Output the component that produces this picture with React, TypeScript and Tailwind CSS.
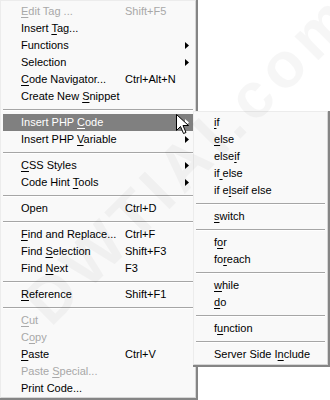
import type { ReactNode } from 'react';

type Item =
  | { sep: true }
  | { label: string; key?: string; sub?: boolean; disabled?: boolean; active?: boolean };

const mainItems: Item[] = [
  { label: '&Edit Tag ...', key: 'Shift+F5', disabled: true },
  { label: 'Insert &Tag...' },
  { label: 'Functions', sub: true },
  { label: 'Selection', sub: true },
  { label: '&Code Navigator...', key: 'Ctrl+Alt+N' },
  { label: 'Create New &Snippet' },
  { sep: true },
  { label: 'Insert PHP &Code', sub: true, active: true },
  { label: 'Insert PHP &Variable', sub: true },
  { sep: true },
  { label: '&CSS Styles', sub: true },
  { label: 'Code Hint &Tools', sub: true },
  { sep: true },
  { label: 'Open', key: 'Ctrl+D' },
  { sep: true },
  { label: '&Find and Replace...', key: 'Ctrl+F' },
  { label: 'Find &Selection', key: 'Shift+F3' },
  { label: 'Find &Next', key: 'F3' },
  { sep: true },
  { label: '&Reference', key: 'Shift+F1' },
  { sep: true },
  { label: '&Cut', disabled: true },
  { label: 'C&opy', disabled: true },
  { label: '&Paste', key: 'Ctrl+V' },
  { label: 'Paste &Special...', disabled: true },
  { label: 'Print Code...' },
];

const phpItems: Item[] = [
  { label: '&if' },
  { label: '&else' },
  { label: 'else&if' },
  { label: 'if& else' },
  { label: 'if e&lseif else' },
  { sep: true },
  { label: '&switch' },
  { sep: true },
  { label: 'f&or' },
  { label: 'fo&reach' },
  { sep: true },
  { label: '&while' },
  { label: '&do' },
  { sep: true },
  { label: 'f&unction' },
  { sep: true },
  { label: 'Server Side I&nclude' },
];

function Mnemonic({ text }: { text: string }) {
  const i = text.indexOf('&');
  if (i < 0) return <>{text}</>;
  const ch = text[i + 1];
  return (
    <>
      {text.slice(0, i)}
      <span className="underline underline-offset-[2px] whitespace-pre">{ch}</span>
      {text.slice(i + 2)}
    </>
  );
}

function Arrow({ white }: { white?: boolean }) {
  return (
    <svg width="4" height="7" viewBox="0 0 4 7" className="block">
      <path d="M0 0 L4 3.5 L0 7 Z" fill={white ? '#ffffff' : '#000000'} />
    </svg>
  );
}

function Separator() {
  return (
    <div className="h-[9px] flex items-center px-[2px]">
      <div className="w-full h-[2px] border-t border-[#a6a6a6] border-b border-b-white" />
    </div>
  );
}

function Row({ item, keyCol }: { item: Exclude<Item, { sep: true }>; keyCol?: boolean }) {
  return (
    <div
      className={
        'h-[17px] mx-[2px] flex items-center whitespace-nowrap ' +
        (item.active ? 'bg-[#808080] text-white ' : '') +
        (item.disabled ? 'text-[#a8a8a8]' : item.active ? '' : 'text-black')
      }
    >
      <span className={keyCol ? 'pl-[18px] w-[122px]' : 'pl-[18px]'}>
        <Mnemonic text={item.label} />
      </span>
      {keyCol && <span className="w-[62px]">{item.key ?? ''}</span>}
      {item.sub && (
        <span className="ml-auto mr-[4px]">
          <Arrow white={item.active} />
        </span>
      )}
    </div>
  );
}

function Menu({ items, keyCol, className }: { items: Item[]; keyCol?: boolean; className?: string }) {
  return (
    <div className={'border-r-2 border-b-2 border-[#858585] ' + (className ?? '')}>
      <div className="h-full border-t border-l border-[#ececec] border-r border-b border-r-[#d6d6d6] border-b-[#d6d6d6] bg-[#f9f9f9] py-[2px]">
        {items.map((it, i): ReactNode =>
          'sep' in it ? <Separator key={i} /> : <Row key={i} item={it} keyCol={keyCol} />
        )}
      </div>
    </div>
  );
}

function Cursor() {
  return (
    <svg width="13" height="21" viewBox="0 0 13 21" className="absolute left-[176px] top-[114px]">
      <path
        d="M0.5 0.5 L0.5 16.5 L4.5 12.5 L7.5 19.5 L10 18.5 L7 11.5 L12.5 11.5 Z"
        fill="#ffffff"
        stroke="#000000"
        strokeWidth="1"
        strokeLinejoin="miter"
      />
    </svg>
  );
}

export default function App() {
  return (
    <div
      className="relative w-[330px] h-[400px] bg-white overflow-hidden text-[11px] leading-[17px]"
      style={{ fontFamily: '"Liberation Sans", Arial, sans-serif' }}
    >
      <Menu items={mainItems} keyCol className="w-[198px] h-[400px]" />
      <Menu items={phpItems} className="absolute left-[193px] top-[111px] w-[137px] h-[256px]" />
      <Cursor />
      <div className="absolute left-[-20px] top-[170px] w-[380px] text-center -rotate-45 pointer-events-none text-[64px] font-bold tracking-[6px] text-black/[0.035]">
        DWTIAI.com
      </div>
    </div>
  );
}
